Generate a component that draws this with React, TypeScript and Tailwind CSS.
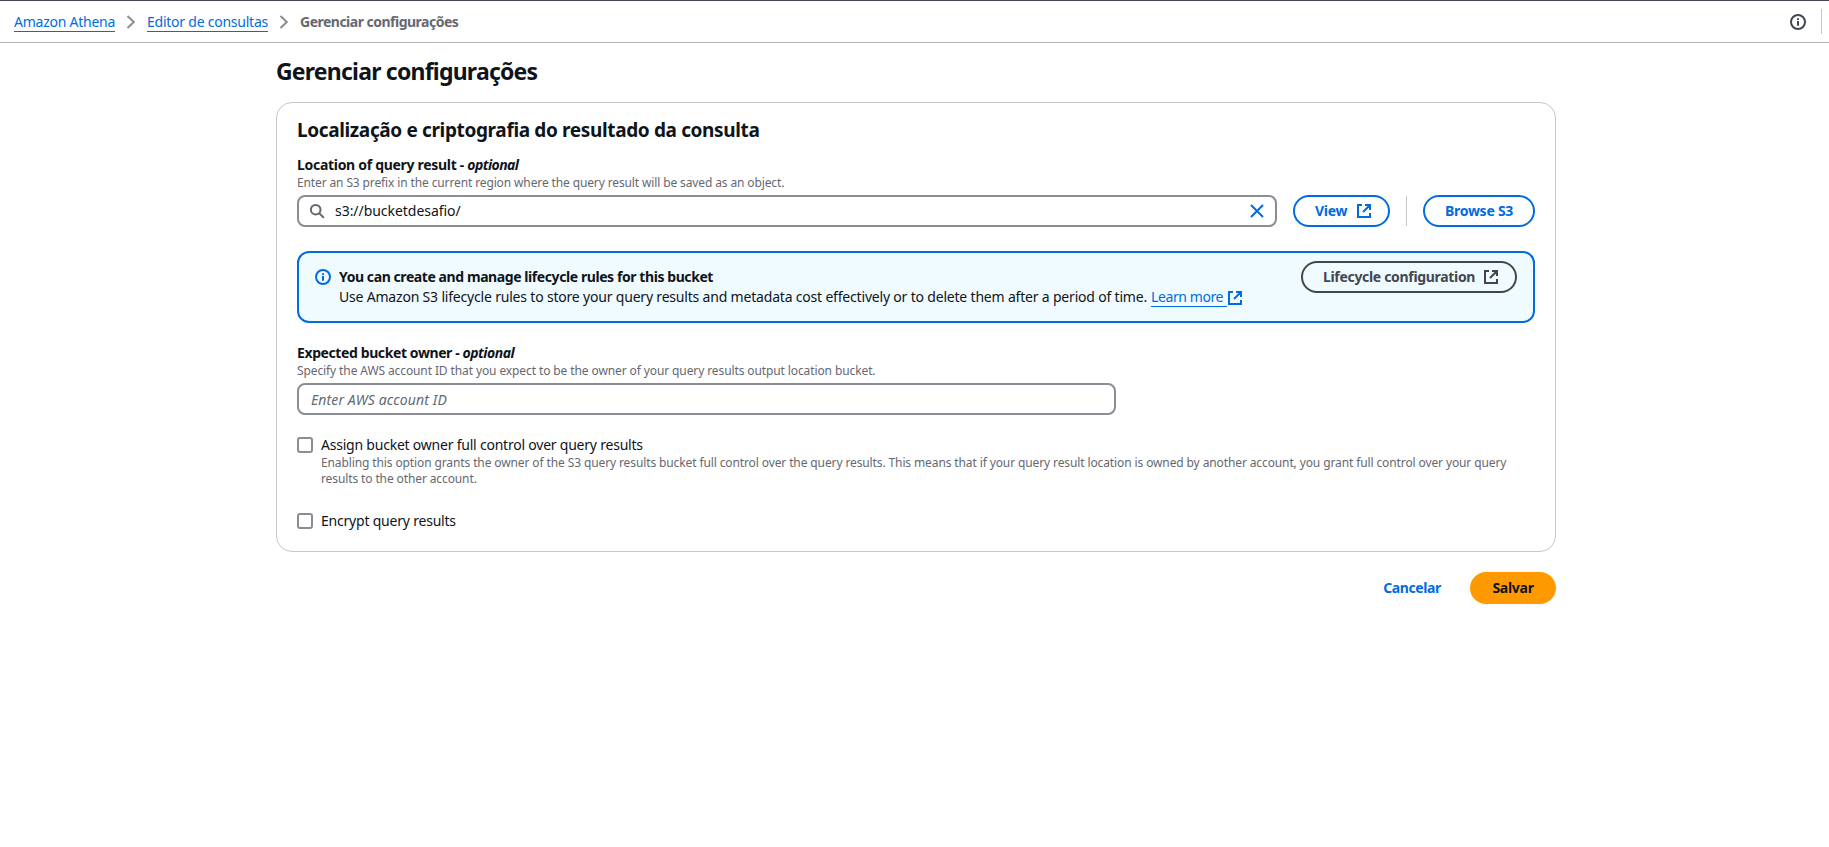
import React from 'react';

type IconProps = { className?: string };

function ExternalIcon({ className = '' }: IconProps) {
  return (
    <svg viewBox="0 0 16 16" className={`size-4 shrink-0 ${className}`} fill="none" stroke="currentColor" strokeWidth="2">
      <path d="M9 2h5v5M7 9l7-7M14 10v4H2V2h4" />
    </svg>
  );
}

function ChevronIcon() {
  return (
    <svg viewBox="0 0 16 16" className="mx-2 size-4 shrink-0 text-[#8c8c94]" fill="none" stroke="currentColor" strokeWidth="2">
      <path d="M4.5 2l6.3 6-6.3 6" />
    </svg>
  );
}

function InfoIcon({ className = '' }: IconProps) {
  return (
    <svg viewBox="0 0 16 16" className={`size-4 shrink-0 ${className}`} fill="none" stroke="currentColor" strokeWidth="2">
      <circle cx="8" cy="8" r="7" />
      <path d="M8 4.2v1.9M8 7.1v4.6M7 8h1" />
    </svg>
  );
}

function SearchIcon() {
  return (
    <svg viewBox="0 0 16 16" className="size-4 shrink-0 text-[#656871]" fill="none" stroke="currentColor" strokeWidth="2">
      <circle cx="6.7" cy="6.7" r="4.8" />
      <path d="M10 10l4.9 4.9" />
    </svg>
  );
}

function CloseIcon() {
  return (
    <svg viewBox="0 0 16 16" className="size-4 shrink-0 text-[#006ce0]" fill="none" stroke="currentColor" strokeWidth="2">
      <path d="M2 2l12 12M14 2L2 14" />
    </svg>
  );
}

function Checkbox() {
  return <input type="checkbox" className="mt-0.5 size-4 shrink-0 appearance-none rounded-[3px] border-2 border-[#8c8c94] bg-white" />;
}

export default function App() {
  return (
    <div className="min-h-[847px] bg-white font-['Noto_Sans',sans-serif] text-sm leading-5 text-[#0f141a]">
      <header className="flex h-[43px] items-center border-t border-b border-t-[#424650] border-b-[#b4b4bb] pl-3.5 pr-[7px]">
        <nav className="flex items-center">
          <a className="w-[101px] whitespace-nowrap border-b border-[#006ce0] leading-[19px] tracking-[-0.25px] text-[#006ce0]">Amazon Athena</a>
          <ChevronIcon />
          <a className="w-[121px] whitespace-nowrap border-b border-[#006ce0] leading-[19px] tracking-[-0.24px] text-[#006ce0]">Editor de consultas</a>
          <ChevronIcon />
          <span className="whitespace-nowrap font-bold tracking-[-0.51px] text-[#656871]">Gerenciar configurações</span>
        </nav>
        <div className="ml-auto flex items-center gap-[15px]">
          <InfoIcon className="text-[#424650]" />
          <div className="h-[25px] w-px bg-[#c6c6cd]" />
        </div>
      </header>

      <main className="ml-[276px] w-[1280px] pt-[13px]">
        <h1 className="text-[23px] leading-[30px] font-bold tracking-[-0.78px]">Gerenciar configurações</h1>

        <section className="mt-4 rounded-2xl border border-[#c6c6cd] px-5 pt-[15px] pb-5">
          <h2 className="text-[19px] leading-6 font-bold tracking-[-0.36px]">Localização e criptografia do resultado da consulta</h2>

          <div className="mt-[13px]">
            <label className="block font-bold tracking-[-0.3px]">
              Location of query result - <i className="tracking-[-0.55px]">optional</i>
            </label>
            <p className="text-xs leading-4 tracking-[-0.125px] text-[#656871]">
              Enter an S3 prefix in the current region where the query result will be saved as an object.
            </p>
            <div className="mt-1 flex items-center">
              <div className="flex h-8 w-[980px] items-center rounded-lg border-2 border-[#8c8c94] px-2.5">
                <SearchIcon />
                <input type="text" defaultValue="s3://bucketdesafio/" className="ml-2.5 min-w-0 flex-1 tracking-[-0.04px] outline-none" />
                <CloseIcon />
              </div>
              <button className="ml-4 flex h-8 w-[97px] items-center justify-between rounded-full border-2 border-[#006ce0] pr-4 pl-5 font-bold tracking-[-0.25px] text-[#006ce0]">
                View
                <ExternalIcon />
              </button>
              <div className="ml-4 h-[30px] w-px bg-[#c6c6cd]" />
              <button className="ml-4 h-8 w-28 rounded-full border-2 border-[#006ce0] font-bold tracking-[-0.25px] text-[#006ce0]">
                Browse S3
              </button>
            </div>
          </div>

          <div className="mt-6 flex h-[72px] items-start rounded-xl border-2 border-[#006ce0] bg-[#f0fbff] px-4">
            <InfoIcon className="mt-4 text-[#006ce0]" />
            <div className="ml-2 pt-[14px]">
              <p className="font-bold tracking-[-0.42px]">You can create and manage lifecycle rules for this bucket</p>
              <p className="flex whitespace-nowrap tracking-[-0.19px]">
                <span className="w-[812px]">
                  Use Amazon S3 lifecycle rules to store your query results and metadata cost effectively or to delete them after a period of time.
                </span>
                <a className="w-[76px] border-b border-[#006ce0] leading-[19px] tracking-[-0.4px] text-[#006ce0]">Learn more</a>
                <ExternalIcon className="mt-[3px] text-[#006ce0]" />
              </p>
            </div>
            <button className="mt-2 ml-auto flex h-8 w-[216px] items-center justify-between rounded-full border-2 border-[#424650] pr-4 pl-5 font-bold tracking-[-0.32px] text-[#424650]">
              Lifecycle configuration
              <ExternalIcon />
            </button>
          </div>

          <div className="mt-5">
            <label className="block font-bold tracking-[-0.4px]">
              Expected bucket owner - <i className="tracking-[-0.5px]">optional</i>
            </label>
            <p className="text-xs leading-4 tracking-[-0.106px] text-[#656871]">
              Specify the AWS account ID that you expect to be the owner of your query results output location bucket.
            </p>
            <input
              type="text"
              placeholder="Enter AWS account ID"
              className="mt-1 block h-8 w-[819px] rounded-lg border-2 border-[#8c8c94] px-3 tracking-[0.12px] outline-none placeholder:text-[#656871] placeholder:italic"
            />
          </div>

          <div className="mt-5 flex gap-2">
            <Checkbox />
            <div>
              <label className="block tracking-[-0.22px]">Assign bucket owner full control over query results</label>
              <p className="text-xs leading-4 tracking-[-0.114px] text-[#656871]">
                Enabling this option grants the owner of the S3 query results bucket full control over the query results. This means that if your
                query result location is owned by another account, you grant full control over your query results to the other account.
              </p>
            </div>
          </div>

          <div className="mt-6 flex gap-2">
            <Checkbox />
            <label className="tracking-[-0.21px]">Encrypt query results</label>
          </div>
        </section>

        <div className="mt-5 flex justify-end">
          <button className="h-8 w-[100px] rounded-full font-bold tracking-[-0.4px] text-[#006ce0]">Cancelar</button>
          <button className="ml-2 h-8 w-[86px] rounded-full bg-[#ff9900] font-bold tracking-[-0.28px]">Salvar</button>
        </div>
      </main>
    </div>
  );
}
